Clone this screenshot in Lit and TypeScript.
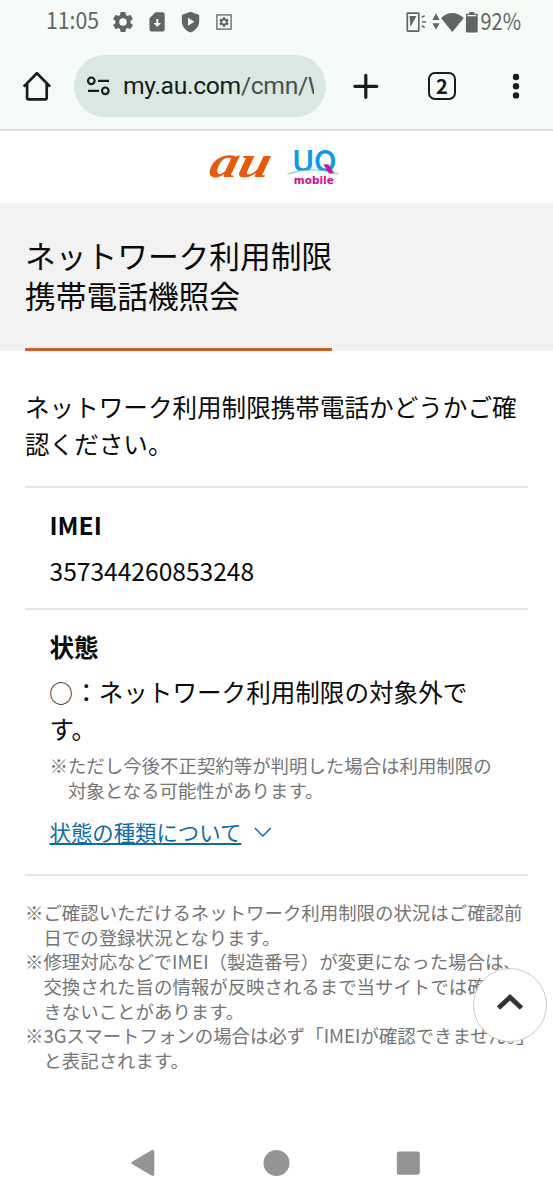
import { LitElement, html, css, svg } from "lit";
import { customElement } from "lit/decorators.js";

const GEAR = svg`<path fill-rule="evenodd" d="M19.14 12.94c.04-.3.06-.61.06-.94s-.02-.64-.07-.94l2.03-1.58a.5.5 0 0 0 .12-.61l-1.92-3.32a.49.49 0 0 0-.59-.22l-2.39.96a7 7 0 0 0-1.62-.94l-.36-2.54a.48.48 0 0 0-.48-.41h-3.84a.47.47 0 0 0-.47.41l-.36 2.54c-.59.24-1.13.57-1.62.94l-2.39-.96a.48.48 0 0 0-.59.22L2.74 8.87a.47.47 0 0 0 .12.61l2.03 1.58a6 6 0 0 0 0 1.88l-2.03 1.58a.5.5 0 0 0-.12.61l1.92 3.32c.12.22.37.29.59.22l2.39-.96c.5.38 1.03.7 1.62.94l.36 2.54c.05.24.24.41.48.41h3.84c.24 0 .44-.17.47-.41l.36-2.54c.59-.24 1.13-.56 1.62-.94l2.39.96c.22.08.47 0 .59-.22l1.92-3.32a.47.47 0 0 0-.12-.61zM12 15.6a3.6 3.6 0 1 1 0-7.2 3.6 3.6 0 0 1 0 7.2z"/>`;

@customElement("status-bar")
class StatusBar extends LitElement {
  static styles = css`
    :host { display: flex; height: 43px; align-items: center; color: #626663; box-sizing: border-box; padding: 0 29px 0 45px; }
    svg { display: block; fill: currentColor; flex: none; overflow: visible; }
    text { font: 23.5px "Noto Sans CJK JP", sans-serif; }
    .time { margin-right: 12px; }
    .left { display: flex; gap: 13px; align-items: center; }
    .right { display: flex; align-items: center; margin-left: auto; }
    .gap { margin-right: 5px; }
  `;
  render() {
    return html`
      <svg class="time" width="55" height="43" viewBox="0 0 55 43"><text x="1" y="29.200" textLength="53" lengthAdjust="spacingAndGlyphs">11:05</text></svg>
      <div class="left">
        <svg width="22" height="22" viewBox="1.5 1.5 21 21">${GEAR}</svg>
        <svg width="22" height="22" viewBox="0 0 22 22"><path fill-rule="evenodd" d="M8.500 1.200h7.200a2 2 0 0 1 2 2v15.300a2 2 0 0 1-2 2H4.500a2 2 0 0 1-2-2V7.200zM9.300 8v4H6.500l3.800 4 3.800-4h-2.800V8z"/></svg>
        <svg width="20" height="22" viewBox="0 0 20 22"><path fill-rule="evenodd" d="M8.500 .8l8.700 3.100v6.300c0 5-3.500 9.500-8.700 11.300C3.300 19.700-.2 15.200-.2 10.200V3.900zM6 6.700v8l6.300-4z"/></svg>
        <svg width="18" height="18" viewBox="0 0 18 18"><rect x="1.900" y="1.900" width="14.200" height="14.200" fill="none" stroke="currentColor" stroke-width="1.300"/><g transform="translate(3 3) scale(.5)">${GEAR}</g></svg>
      </div>
      <div class="right">
        <svg class="gap" width="21" height="22" viewBox="0 0 21 22"><rect x="1.300" y="2.200" width="11.500" height="18" rx=".6" fill="none" stroke="currentColor" stroke-width="1.700"/><path d="M3.500 5h7L4.500 16zM15.300 5.800l3-1.900.8 1.300-3 1.700zM16 10.200h4v1.600h-4zM15.300 15.300l.8-1.300 3 1.900-.8 1.300z"/></svg>
        <svg width="8" height="22" viewBox="0 0 8 22"><path d="M.5 8.900L4 2.300l3.500 6.600zM.5 12.300h7L4 18.800z"/></svg>
        <svg width="25" height="22" viewBox="0 0 25 22"><path d="M1 7Q12.200-3 23.800 7L12.300 21z"/></svg>
        <svg width="14" height="22" viewBox="0 0 14 22"><path fill-rule="evenodd" d="M4.300 1h5v1.700h2.400a1 1 0 0 1 1 1v16.800a1 1 0 0 1-1 1H1.900a1 1 0 0 1-1-1V3.700a1 1 0 0 1 1-1h2.400zM2.300 3.900v1.400h9V3.900z"/></svg>
        <svg width="45" height="43" viewBox="0 0 45 43"><text x="1.500" y="29.700" textLength="40.500" lengthAdjust="spacingAndGlyphs">92%</text></svg>
      </div>`;
  }
}

@customElement("browser-bar")
class BrowserBar extends LitElement {
  static styles = css`
    :host { display: flex; height: 88px; box-sizing: border-box; align-items: flex-start; padding: 12px 24px 0 22px; border-bottom: 2px solid #dce3df; color: #161d1a; }
    svg { display: block; flex: none; }
    .home { margin: 15px 22px 0 0; }
    .pill { width: 252px; height: 62px; border-radius: 31px; background: #d9e8e3; display: flex; align-items: center; box-sizing: border-box; padding: 0 12px 0 12px; flex: none; }
    .url { margin-left: 12px; width: 191px; overflow: hidden; white-space: nowrap; font: 24.7px/40px Roboto, sans-serif; letter-spacing: -.32px; }
    .path { color: #46524d; }
    .plus { margin: 17px 0 0 26px; }
    .tabs { margin: 17px 0 0 49px; width: 28px; height: 28px; box-sizing: border-box; border: 2.700px solid #161d1a; border-radius: 7px; display: flex; align-items: center; justify-content: center; font: 700 20px/22px "Noto Sans CJK JP", sans-serif; }
    .dots { margin: 17px 0 0 auto; }
  `;
  render() {
    return html`
      <svg class="home" width="30" height="32" viewBox="0 0 30 32" fill="none" stroke="currentColor" stroke-width="2.700" stroke-linejoin="round"><path d="M1.700 16.600L14.900 3.300l13.200 13.300M5.100 14v13.700q0 1.600 1.600 1.600h16.400q1.600 0 1.600-1.600V14"/></svg>
      <div class="pill">
        <svg width="25" height="22" viewBox="0 0 25 22" fill="none" stroke="currentColor" stroke-width="2.200"><circle cx="5.300" cy="5.800" r="3.300"/><path d="M12 5.800h11M2 15.800h11"/><circle cx="19.300" cy="15.800" r="3.300"/></svg>
        <div class="url">my.au.com<span class="path">/cmn/W</span></div>
      </div>
      <svg class="plus" width="27" height="28" viewBox="0 0 27 28" stroke="currentColor" stroke-width="3.200" stroke-linecap="round"><path d="M2.800 14.300h22M13.800 3.300v22"/></svg>
      <div class="tabs">2</div>
      <svg class="dots" width="27" height="28" viewBox="0 0 27 28" fill="currentColor"><circle cx="14" cy="5" r="3.200"/><circle cx="14" cy="14.200" r="3.200"/><circle cx="14" cy="23.400" r="3.200"/></svg>`;
  }
}

@customElement("site-header")
class SiteHeader extends LitElement {
  static styles = css`
    :host { display: flex; height: 72px; background: #fff; padding-left: 207px; box-sizing: border-box; }
    svg { display: block; overflow: visible; }
    .au { font: italic 700 46px "Liberation Serif", serif; fill: #e55a0c; }
    .uq { font: 600 30.5px Inter, sans-serif; fill: #0a9af0; }
    .mobile { font: 700 11px "DejaVu Sans", sans-serif; fill: #d3108d; }
  `;
  render() {
    return html`
      <svg width="64" height="72" viewBox="0 0 64 72"><text class="au" transform="skewX(-14)" x="12" y="46" textLength="60" lengthAdjust="spacingAndGlyphs">au</text></svg>
      <svg width="80" height="72" viewBox="0 0 80 72">
        <text class="uq" x="21.500" y="41" textLength="44" lengthAdjust="spacingAndGlyphs">UQ</text>
        <path d="M16.500 43Q41 35 67.500 43V45H16.500z" fill="#fff"/>
        <path d="M16.500 43Q41 34.500 67.500 43" fill="none" stroke="#6bb5df" stroke-width=".9"/>
        <path d="M52.500 33.500h5l5.500 9h-5z" fill="#d3108d"/>
        <text class="mobile" x="22.800" y="52.500" textLength="40" lengthAdjust="spacingAndGlyphs">mobile</text>
      </svg>`;
  }
}

@customElement("nav-keys")
class NavKeys extends LitElement {
  static styles = css`
    :host { display: flex; justify-content: space-between; padding: 0 132px 0 130px; fill: #949494; }
    svg { display: block; }
  `;
  render() {
    return html`
      <svg width="26" height="28" viewBox="0 0 26 28"><path d="M2 12.700L21.500 1.300q2.800-1 2.800 1.600v22q0 2.600-2.800 1.600L2 15.100q-1.800-1.200 0-2.400z"/></svg>
      <svg width="28" height="28" viewBox="0 0 28 28"><circle cx="14.500" cy="14" r="13"/></svg>
      <svg width="26" height="28" viewBox="0 0 26 28"><rect x="1.800" y="2.400" width="23" height="23.300" rx="2.500"/></svg>`;
  }
}

@customElement("app-root")
class AppRoot extends LitElement {
  static styles = css`
    :host { display: flex; flex-direction: column; position: relative; width: 553px; height: 1200px; overflow: hidden; background: #fff; color: #0a0a0a;
      font-family: "Noto Sans CJK JP", sans-serif; font-size: 24.580px; line-height: 36.870px; white-space: nowrap; }
    * { box-sizing: border-box; }
    .chrome { background: #f5fbf7; flex: none; }
    .hero { height: 148px; background: #f2f2f2; padding: 32px 25px 0; flex: none; }
    h1 { margin: 0; display: inline-block; height: 116px; width: 307px; border-bottom: 3px solid #cf5f2b; font-size: 30.720px; font-weight: 400; line-height: 40px; }
    main { padding: 37px 25px 0; flex: none; height: 799px; }
    .lead { margin: 0; height: 98px; }
    section { border-top: 2px solid #e4e4e4; padding-left: 24.500px; }
    h2 { margin: 0; font-size: inherit; line-height: inherit; font-weight: 700; }
    p { margin: 0; }
    .imei { height: 121.500px; padding-top: 18px; }
    .imei p { margin-top: 9px; }
    .state { height: 266px; padding-top: 18px; }
    .state .result { margin-top: 9px; }
    .mark { display: inline-block; width: 1em; font-size: 23px; line-height: 30px; margin-right: 1.600px; }
    .note { font-size: 18.430px; line-height: 24.580px; color: #757575; padding-left: 1em; text-indent: -1em; }
    .state .note { margin-top: 6px; }
    .more { display: flex; align-items: center; margin-top: 14px; color: #0f6aa5; font-size: 21.400px; line-height: 32px; }
    .more a { color: inherit; text-decoration: underline; text-decoration-thickness: 1.500px; text-underline-offset: 2px; }
    .more svg { margin-left: 13px; }
    .notes { border-top: 2px solid #e4e4e4; padding: 24.800px 0 0; }
    .top { position: absolute; left: 473px; top: 967.500px; width: 74px; height: 74px; border-radius: 50%; border: 1.500px solid #c9c9c9; background: #fff; padding: 0; display: flex; align-items: center; justify-content: center; }
    .top svg { margin-bottom: 3px; }
    nav-keys { margin-top: -1px; }
  `;
  render() {
    return html`
      <div class="chrome"><status-bar></status-bar><browser-bar></browser-bar></div>
      <site-header></site-header>
      <div class="hero"><h1>ネットワーク利用制限<br>携帯電話機照会</h1></div>
      <main>
        <p class="lead">ネットワーク利用制限携帯電話かどうかご確<br>認ください。</p>
        <section class="imei"><h2>IMEI</h2><p>357344260853248</p></section>
        <section class="state">
          <h2>状態</h2>
          <p class="result"><span class="mark">◯</span>：ネットワーク利用制限の対象外で<br>す。</p>
          <p class="note">※ただし今後不正契約等が判明した場合は利用制限の<br>対象となる可能性があります。</p>
          <div class="more"><a>状態の種類について</a><svg width="18" height="14" viewBox="0 0 18 14" fill="none" stroke="currentColor" stroke-width="1.500"><path d="M.8 3l8 8 8-8"/></svg></div>
        </section>
        <div class="notes">
          <p class="note">※ご確認いただけるネットワーク利用制限の状況はご確認前<br>日での登録状況となります。</p>
          <p class="note">※修理対応などでIMEI（製造番号）が変更になった場合は、<br>交換された旨の情報が反映されるまで当サイトでは確認で<br>きないことがあります。</p>
          <p class="note">※3Gスマートフォンの場合は必ず「IMEIが確認できません。」<br>と表記されます。</p>
        </div>
      </main>
      <nav-keys></nav-keys>
      <button class="top" aria-label="ページの先頭へ"><svg width="28" height="20" viewBox="0 0 28 20" fill="none" stroke="#333" stroke-width="4.800"><path d="M2.500 15L14 4.200 25.500 15"/></svg></button>`;
  }
}
